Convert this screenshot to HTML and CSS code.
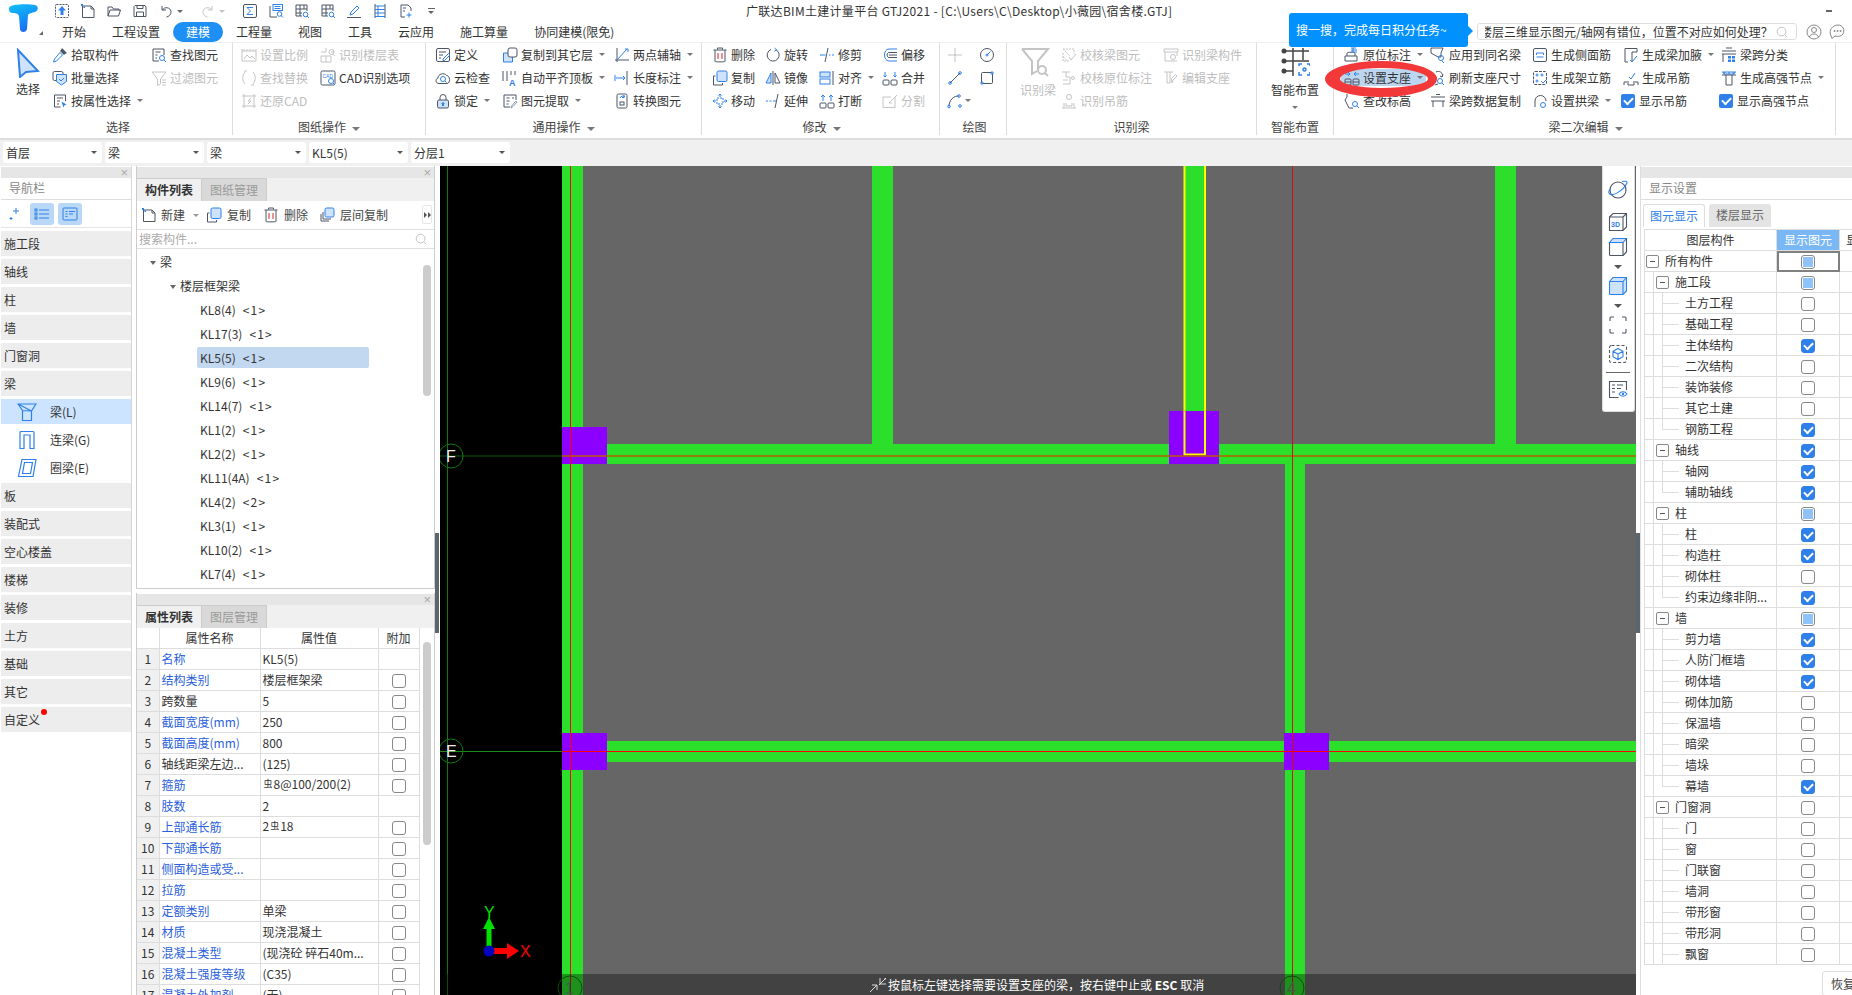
FILE: index.html
```html
<!DOCTYPE html>
<html lang="zh-CN">
<head>
<meta charset="utf-8">
<title>广联达BIM土建计量平台 GTJ2021</title>
<link rel="stylesheet" href="styles.css">
</head>
<body>
<svg class="sprite" aria-hidden="true">
<defs>
<linearGradient id="logo-g" x1="0" y1="0" x2="0.4" y2="1"><stop offset="0" stop-color="#12c3f7"/><stop offset=".55" stop-color="#1296f5"/><stop offset="1" stop-color="#1a6ff0"/></linearGradient>
<symbol id="i-new" viewBox="0 0 16 16"><path d="M3 3h8l3 3v8.500H2.500V3z"/><path d="M11 3v3h3"/><path class="fb" d="M1 1h2v2H1zM3.500 3.500h1.500v1.500H3.500z"/></symbol>
<symbol id="i-open" viewBox="0 0 16 16"><path d="M2 13V4h4l1.500 2H13v1.500M2 13l2-6h10.500L12.500 13z"/></symbol>
<symbol id="i-up" viewBox="0 0 16 16"><rect x="1.500" y="1.500" width="13" height="13" rx="1" stroke-dasharray="2 1"/><path class="fb" d="M8 3l4 4.500H9.500V12h-3V7.500H4z"/></symbol>
<symbol id="i-save" viewBox="0 0 16 16"><path d="M3 2.500h10l1 1.500v9.500H2V3.500z"/><path d="M5 2.500v3h6v-3M4.500 13.500V9h7v4.500"/></symbol>
<symbol id="i-undo" viewBox="0 0 16 16"><path d="M4 3v4h4M4.500 7C6 3.500 12.500 4 13 8.500c.3 3-2 5-4.500 5.500"/></symbol>
<symbol id="i-redo" viewBox="0 0 16 16"><path d="M12 3v4H8M11.500 7C10 3.500 3.500 4 3 8.500c-.3 3 2 5 4.500 5.500"/></symbol>
<symbol id="i-sum" viewBox="0 0 16 16"><rect x="1.500" y="1.500" width="13" height="13" rx="1.500"/><path class="u" d="M11 4.500H5l3.500 3.500L5 11.500h6"/></symbol>
<symbol id="i-calc" viewBox="0 0 16 16"><path d="M2 3v11h7"/><rect class="u" x="5" y="1.500" width="9.500" height="6"/><path class="u" d="M6.500 3.500h6M6.500 5.500h6"/><circle class="u" cx="11.500" cy="11" r="2.300"/><path class="u" d="M13 12.500l2 2"/></symbol>
<symbol id="i-gridq" viewBox="0 0 16 16"><path d="M2 2h11v6M2 2v11h6M2 6h11M2 10h6M6 2v11M10 2v4"/><circle class="u" cx="11.500" cy="11.500" r="2.300"/><path class="u" d="M13 13l2 2"/></symbol>
<symbol id="i-pen" viewBox="0 0 16 16"><path class="u" d="M4 12l1-3 6-6 2 2-6 6z"/><path d="M1 14.500h14"/></symbol>
<symbol id="i-ruler" viewBox="0 0 16 16"><path d="M3 1v14M13 1v14"/><path class="u" d="M3 3h10M3 6.500h10M3 10h10M3 13.500h10M6 3v10.500"/></symbol>
<symbol id="i-pdoc" viewBox="0 0 16 16"><path d="M3 2h7l3 3v3M3 2v12h4"/><path class="u" d="M11 9.500v5M8.500 12h5"/><path d="M5 5h3M5 8h2"/></symbol>
<symbol id="i-pick" viewBox="0 0 16 16"><path class="fk" d="M10 1l5 5-2 1-1 1-4-4 1-1z"/><path class="u" d="M8 5.500l2.500 2.500-6 6-3 1 1-3z"/></symbol>
<symbol id="i-batch" viewBox="0 0 16 16"><rect x="1" y="1.500" width="10" height="9" rx="1.500"/><path class="u f" d="M4.500 4.500h10v7l-5 3.500-5-3.500z"/><path class="u" d="M7 9l2 2 3-3"/></symbol>
<symbol id="i-attr" viewBox="0 0 16 16"><path d="M13.500 8V2h-11v12h6"/><path d="M5 5h6M5 8h3M5 11h2"/><path class="fb" d="M9.500 8.500l5 3-2 .8-1 2.200z"/></symbol>
<symbol id="i-find" viewBox="0 0 16 16"><path d="M2 2h11v6M2 2v12h6"/><path d="M4.500 5h5M4.500 8h2M4.500 11h1.500"/><circle class="u" cx="11" cy="11" r="2.500"/><path class="u" d="M13 13l2 2"/></symbol>
<symbol id="i-filter" viewBox="0 0 16 16"><path d="M1 2h14l-5.500 7v5l-3 1.500V9z"/><path d="M11 10h4M11 12.500h4M11 15h4"/></symbol>
<symbol id="i-scale" viewBox="0 0 16 16"><path d="M1 4v10h14V4M1 2v2h14V2M3 2v2M6 2v2M9 2v2M12 2v2"/><path d="M3 12l3-4 3 3 2-2 3 3"/></symbol>
<symbol id="i-floor" viewBox="0 0 16 16"><path d="M1 5h5V1M1 9h5v6H1zM6 9h5M11 9v6H6M11 5h3"/><circle cx="11.500" cy="5" r="2.500"/><path d="M13 7l2 2"/></symbol>
<symbol id="i-replace" viewBox="0 0 16 16"><path d="M4 2C1 5 1 11 4 14M12 2c3 3 3 9 0 12"/><path d="M3 1h3M10 15h3"/></symbol>
<symbol id="i-cad" viewBox="0 0 16 16"><rect x="1" y="1" width="14" height="14" rx="1.500"/><circle class="u" cx="11" cy="11" r="2.500"/><path class="u" d="M13 13l2 2"/><text class="tt" x="2.500" y="7.500">CAD</text></symbol>
<symbol id="i-restore" viewBox="0 0 16 16"><path d="M3 1v14M13 1v14M1 3h14M1 13h14"/><path d="M10 5L7 8h3l-3 3"/></symbol>
<symbol id="i-def" viewBox="0 0 16 16"><rect x="1.500" y="1.500" width="13" height="13" rx="1.500"/><path d="M4 5h7M4 8h4M4 11h2"/><path class="u" d="M8 12l5.500-5.500 1.500 1.500L9.500 13.500H8z"/></symbol>
<symbol id="i-cloud" viewBox="0 0 16 16"><path d="M4 13.500C.5 13.500 0 9 3 8c0-4 6-6 8.500-2.500C15 5.500 16 13 12 13.500z"/><circle class="u" cx="8" cy="9" r="2.500"/><path class="u" d="M10 11l1.500 1.500"/></symbol>
<symbol id="i-lock" viewBox="0 0 16 16"><path d="M5 7V4.500a3 3 0 016 0V7"/><rect class="f" x="2.500" y="7" width="11" height="8" rx="1.500"/><path class="fb" d="M8 9l2 2H9v2H7v-2H6z"/></symbol>
<symbol id="i-copyto" viewBox="0 0 16 16"><path class="u f" d="M1.500 6h9v9h-9z"/><rect x="6" y="1" width="9" height="9" rx="2" fill="#fff"/></symbol>
<symbol id="i-align" viewBox="0 0 16 16"><path d="M1 1v10M5 1v10M9 1v4M13 1v4"/><text class="ta" x="7" y="15.500">A</text></symbol>
<symbol id="i-extract" viewBox="0 0 16 16"><path d="M2 2h12v5M2 2v12h6"/><path d="M4.500 5h3M10 5h2M4.500 8h3M4.500 11h2"/><path d="M15 9l-4 4.500-2 1.500.5-2 4-4.500z" stroke="#8899aa"/></symbol>
<symbol id="i-twopt" viewBox="0 0 16 16"><path d="M3 1v14M1 13h14"/><path class="u" d="M3 13L13 2M11 2h3v3"/></symbol>
<symbol id="i-dim" viewBox="0 0 16 16"><path d="M13 1v14"/><path class="u" d="M2 8h9M1 5v6M9 6l2 2-2 2"/></symbol>
<symbol id="i-conv" viewBox="0 0 16 16"><rect x="3" y="1" width="10" height="14" rx="1.500"/><path class="u" d="M6 5a3 3 0 015-1M10 2v2.500H8"/><rect x="6" y="9" width="4" height="3"/></symbol>
<symbol id="i-del" viewBox="0 0 16 16"><path d="M5.500 2.500V1h5v1.500M1.500 3h13M3 3v11.500c0 .5 10 .5 10 0V3"/><path d="M6 6v6M10 6v6" stroke="#d22"/></symbol>
<symbol id="i-copy" viewBox="0 0 16 16"><path d="M1.500 6h2M1.500 6v9h9v-2"/><rect class="u f" x="5" y="1" width="10" height="10.500" rx="1.500"/></symbol>
<symbol id="i-layercopy" viewBox="0 0 16 16"><path d="M4 5v7h8M2 7v7h8"/><rect class="u f" x="6" y="1" width="9" height="9" rx="1.500"/></symbol>
<symbol id="i-move" viewBox="0 0 16 16"><rect class="u" x="5" y="5" width="6" height="6" stroke-dasharray="2 1"/><path class="u" d="M8 1v3M8 12v3M1 8h3M12 8h3M6.500 2.500L8 1l1.500 1.500M6.500 13.500L8 15l1.500-1.500M2.500 6.500L1 8l1.500 1.500M13.500 6.500L15 8l-1.500 1.500"/></symbol>
<symbol id="i-rot" viewBox="0 0 16 16"><path d="M6 2.500a6 6 0 105 .3"/><path class="u" d="M9.500 1l2 1.800-2.200 1.500"/></symbol>
<symbol id="i-mirror" viewBox="0 0 16 16"><path d="M8 1v14"/><path class="u f" d="M6 3v10H1z"/><path d="M10 3v10h5z"/></symbol>
<symbol id="i-ext" viewBox="0 0 16 16"><path d="M13 1l-3 14"/><path class="u" d="M1 8h2M4.500 8h2M8 8h3" /></symbol>
<symbol id="i-trim" viewBox="0 0 16 16"><path d="M9 1L6 15"/><path class="u" d="M1 8h5.500M10 8h1.500M13 8h2"/></symbol>
<symbol id="i-alignb" viewBox="0 0 16 16"><rect class="u f" x="1" y="2" width="10" height="5"/><rect class="u" x="1" y="9" width="10" height="5"/><path d="M14 1v14"/></symbol>
<symbol id="i-break" viewBox="0 0 16 16"><rect x="1" y="10" width="6" height="5" rx="1"/><rect x="9" y="10" width="6" height="5" rx="1"/><path class="u" d="M4 8V2M2 4l2-2 2 2M12 8V2M10 4l2-2 2 2"/></symbol>
<symbol id="i-merge" viewBox="0 0 16 16"><rect x="1" y="10" width="6" height="5" rx="1"/><rect x="9" y="10" width="6" height="5" rx="1"/><path class="u" d="M3 2v5M1.500 5.500L3 7l1.500-1.500M13 2v5M11.500 5.500L13 7l1.500-1.500"/></symbol>
<symbol id="i-split" viewBox="0 0 16 16"><path d="M13 4v10.500H1V4h8"/><path d="M15 2l-8 8 3 0"/></symbol>
<symbol id="i-offset" viewBox="0 0 16 16"><path class="u" d="M15 2H7C1 2 1 14 7 14h8"/><path d="M15 5.500H7c-2.500 0-2.500 5 0 5h8M15 8H7"/></symbol>
<symbol id="i-pt" viewBox="0 0 16 16"><path d="M8 1v5M8 10v5M1 8h5M10 8h5"/><circle class="fk" cx="8" cy="8" r="1.500"/></symbol>
<symbol id="i-circ" viewBox="0 0 16 16"><circle cx="8" cy="8" r="6.500"/><circle class="u" cx="8" cy="8" r="1"/><path class="u" d="M8 8l3.500-3.500"/></symbol>
<symbol id="i-line" viewBox="0 0 16 16"><path d="M3 13L13 3"/><circle class="u" cx="3" cy="13" r="1.300"/><circle class="u" cx="13" cy="3" r="1.300"/></symbol>
<symbol id="i-rect" viewBox="0 0 16 16"><rect x="2.500" y="2.500" width="11" height="11" rx="1"/><circle class="u" cx="13" cy="3" r="1.200"/><circle class="u" cx="3" cy="13" r="1.200"/></symbol>
<symbol id="i-arc" viewBox="0 0 16 16"><path d="M2 13.500C2 7 7 2.500 12 3"/><circle class="u" cx="2" cy="13.500" r="1.300"/><circle class="u" cx="12" cy="3" r="1.300"/><circle class="u" cx="13" cy="13" r="1.300"/></symbol>
<symbol id="i-check" viewBox="0 0 16 16"><path d="M2 2h11v5M2 2l7 7M2 6v8h6M2 10l5 4" stroke-dasharray="2 1"/><path d="M8 10l2 3 5-6"/></symbol>
<symbol id="i-cdim" viewBox="0 0 16 16"><path d="M2 14h7V7H5V2"/><path d="M2 10h5M1 2h8"/><circle cx="12" cy="8" r="1.500"/></symbol>
<symbol id="i-hang" viewBox="0 0 16 16"><circle cx="8" cy="4" r="2.500"/><path d="M1 15h14M3 15v-5M13 15v-5M5 10v3h6v-3"/></symbol>
<symbol id="i-brec" viewBox="0 0 16 16"><path d="M1 2h14v3H1zM2 5v9h12M14 5v4"/><circle cx="10" cy="10" r="2.500"/></symbol>
<symbol id="i-esup" viewBox="0 0 16 16"><path d="M1 2h9M4 2v11h3V2"/><path d="M10 13l1-3 4-4-1.500-1.500-4 4z" transform="translate(-1 0)"/></symbol>
<symbol id="i-yw" viewBox="0 0 16 16"><path d="M1 14v-5h12v5zM3 9V6c0-1 8-1 8 0v3"/><path class="u" d="M7 1h5M7 3h6M7 5h6M9 1v4"/></symbol>
<symbol id="i-app" viewBox="0 0 16 16"><path d="M1 1h12l-2 5v4H8L1 6z"/><circle class="u" cx="11" cy="11" r="2.500"/><path class="u" d="M12 14l2 2"/></symbol>
<symbol id="i-sup" viewBox="0 0 16 16"><rect x="1" y="9" width="6" height="6" rx="1"/><rect x="9" y="9" width="6" height="6" rx="1"/><path d="M1 12h6M9 12h6"/><path class="u" d="M1 4h5M4 2l2 2-2 2M15 4h-5M12 2l-2 2 2 2"/></symbol>
<symbol id="i-ref" viewBox="0 0 16 16"><path d="M6 2c3-2 8 1 6 5M13 4.500L12 7l-2-1"/><path d="M2 8h5M2 11h3M8 14l-3 1"/><circle class="u" cx="10" cy="11" r="2.500"/><path class="u" d="M12 13l2 2"/></symbol>
<symbol id="i-lv" viewBox="0 0 16 16"><path d="M3 1v3l-2 3 4 8h4"/><circle class="u" cx="11" cy="11" r="2.500"/><path class="u" d="M13 13l2 2"/></symbol>
<symbol id="i-span" viewBox="0 0 16 16"><path d="M1 4h14M1 8h14M3 8v6M13 8v6"/><path d="M6 1.500h4"/></symbol>
<symbol id="i-side" viewBox="0 0 16 16"><rect x="1.500" y="1.500" width="13" height="13" rx="1.500"/><path class="u" d="M4.500 6h7v2M4.500 6v2M4.500 10h7"/></symbol>
<symbol id="i-frame" viewBox="0 0 16 16"><rect x="1.500" y="1.500" width="13" height="13" rx="1.500" stroke-dasharray="3 1"/><circle class="u" cx="5" cy="5" r="1"/><circle class="u" cx="10" cy="5" r="1"/><circle class="u" cx="5" cy="11" r="1"/><path class="u" d="M9 11l2 2 4-4"/></symbol>
<symbol id="i-arch" viewBox="0 0 16 16"><path d="M3 14V8a5.500 5.500 0 0111 0"/><circle class="u" cx="11" cy="12" r="2.500"/></symbol>
<symbol id="i-hau" viewBox="0 0 16 16"><path d="M2 1.500h12V5H9v10M2 1.500V15h3"/><path class="u" d="M7 13l2 2 5-6"/></symbol>
<symbol id="i-hg" viewBox="0 0 16 16"><path d="M1 15v-3l3 0M15 15v-3l-3 0M5 11v4h6v-4"/><path class="u" d="M6 7l2 2 4-6"/></symbol>
<symbol id="i-sclass" viewBox="0 0 16 16"><path d="M1 4h14M1 7h14M2 7v8"/><path d="M5 1h6"/><path class="fb" d="M7 9h3v2.500H7zM11 9h3v2.500h-3zM7 12.500h3V15H7zM11 12.500h3V15h-3z"/></symbol>
<symbol id="i-node" viewBox="0 0 16 16"><path class="u" d="M1 2h14M2 2l1 2h10l1-2M4 2l-1 2M8 2v2M12 2l1 2"/><path d="M1 5h14M5 5v10h6V5"/></symbol>
<symbol id="i-star" viewBox="0 0 16 16"><path class="u" d="M9 2v6M6 5h6M4 11v3M2.500 12.500h3"/></symbol>
<symbol id="i-list" viewBox="0 0 16 16"><rect class="u" x="1" y="3" width="2" height="2"/><rect class="u" x="1" y="7" width="2" height="2"/><rect class="u" x="1" y="11" width="2" height="2"/><path class="u" d="M5 4h10M5 8h10M5 12h10"/></symbol>
<symbol id="i-form" viewBox="0 0 16 16"><rect class="u" x="1" y="2" width="14" height="12" rx="1"/><path class="u" d="M3.500 5.500h2M7 5.500h6M3.500 8h2M7 8h4M3.500 10.500h2"/></symbol>
<symbol id="i-search" viewBox="0 0 16 16"><circle cx="7.500" cy="7.500" r="5"/><path d="M11 11l3 3"/></symbol>
<symbol id="i-user" viewBox="0 0 16 16"><circle cx="8" cy="8" r="7"/><circle cx="8" cy="6" r="2.500"/><path d="M3.500 13c1-4 8-4 9 0"/></symbol>
<symbol id="i-chat" viewBox="0 0 16 16"><path d="M2 12C-1 6 4 1 9 1c5 0 7 5 5 9-1 2-5 3-8 2l-3 2.500z"/><circle class="fb" cx="5.500" cy="7" r=".9"/><circle class="fb" cx="8.500" cy="7" r=".9"/><circle class="fb" cx="11.500" cy="7" r=".9"/></symbol>
<symbol id="i-planet" viewBox="0 0 20 20"><ellipse cx="10" cy="10" rx="8" ry="8"/><path class="u" d="M1 13C3 18 15 11 19 3c.5-2-3-2-5-1.500"/><path class="u" d="M1 13c-.5-1 .5-3 1.500-4"/></symbol>
<symbol id="i-3d" viewBox="0 0 20 20"><path d="M1.500 5L5 1.500h13.500V15L15 18.500H1.500z"/><path d="M1.500 5H15v13.500M15 5l3.500-3.500"/><text class="t3" x="3" y="15">3D</text></symbol>
<symbol id="i-cube" viewBox="0 0 20 20"><path d="M1.500 5.500v12a1 1 0 001 1H15V5.500z"/><path class="u f" d="M1.500 5.500L5 1.500h13.500L15 5.500z"/><path d="M15 18.500l3.500-3.500V2"/></symbol>
<symbol id="i-cubef" viewBox="0 0 20 20"><path class="u f" d="M1.500 5.500L5 1.500h13.500V15L15 18.500H2.500a1 1 0 01-1-1z"/><path class="u" d="M1.500 5.500H15v13M15 5.500l3.500-4"/></symbol>
<symbol id="i-fit" viewBox="0 0 20 20"><path d="M2 6V3a1 1 0 011-1h3M14 2h3a1 1 0 011 1v3M18 14v3a1 1 0 01-1 1h-3M6 18H3a1 1 0 01-1-1v-3"/></symbol>
<symbol id="i-dcube" viewBox="0 0 20 20"><rect x="1.500" y="1.500" width="17" height="17" rx="2" stroke-dasharray="3 2"/><path class="u" d="M10 4.500l5 2.800v5.400l-5 2.800-5-2.800V7.300zM5 7.300l5 2.800 5-2.800M10 10v5.500"/></symbol>
<symbol id="i-lview" viewBox="0 0 20 20"><path d="M18.500 11V2.500h-17v16h9"/><path d="M4 6h3M9 6h6M4 9.500h3M9 9.500h4M4 13h3"/><circle class="fb" cx="15" cy="15" r="1.200"/><path class="u" d="M11 15c2-3 6-3 8 0-2 3-6 3-8 0z"/></symbol>
<symbol id="i-l" viewBox="0 0 20 20"><path d="M1 2H19L14.500 9V18.500H5.500V8.500zM5.500 8.500L14.500 9M1 2L14.500 9"/></symbol>
<symbol id="i-g" viewBox="0 0 20 20"><path d="M3 18.500V2.500a1 1 0 011-1h12a1 1 0 011 1v16h-4V5H7v13.500z"/></symbol>
<symbol id="i-e" viewBox="0 0 20 20"><path d="M5 1.500h14L16 18.500H1.500z"/><path d="M7.500 4.500h8L13.500 15.500H5.500z"/></symbol>
</defs>
</svg>

<div class="app">
<header class="top">
  <svg class="logo" viewBox="0 0 30 30"><path class="logo-t" d="M3 3C8 1 22 1 27 2C30.500 3 31 7 27 9C24 10 21 10 20 12L19 26C18.500 30 12 30 12 26L11 13C10 10 7 10 4 10C0 9 0 4 3 3z"/></svg>
  <span class="logo-mark"></span>
  <div class="top-main">
    <div class="qa">
      <svg class="ic"><use href="#i-up"/></svg>
      <svg class="ic"><use href="#i-new"/></svg>
      <svg class="ic"><use href="#i-open"/></svg>
      <svg class="ic"><use href="#i-save"/></svg>
      <svg class="ic"><use href="#i-undo"/></svg><span class="caret c-qa"></span>
      <svg class="ic off"><use href="#i-redo"/></svg><span class="caret c-qa off-c"></span>
      <svg class="ic"><use href="#i-sum"/></svg>
      <svg class="ic"><use href="#i-calc"/></svg>
      <svg class="ic"><use href="#i-gridq"/></svg>
      <svg class="ic"><use href="#i-gridq"/></svg>
      <svg class="ic"><use href="#i-pen"/></svg>
      <svg class="ic"><use href="#i-ruler"/></svg>
      <svg class="ic"><use href="#i-pdoc"/></svg>
      <span class="more"></span>
      <span class="title">广联达BIM土建计量平台 GTJ2021 - [C:\Users\C\Desktop\小薇园\宿舍楼.GTJ]</span>
      <span class="minimize"></span>
    </div>
    <div class="tabs">
      <span class="tab">开始</span><span class="tab">工程设置</span><span class="tab on">建模</span><span class="tab">工程量</span><span class="tab">视图</span><span class="tab">工具</span><span class="tab">云应用</span><span class="tab">施工算量</span><span class="tab">协同建模(限免)</span>
      <div class="help"><span class="help-text">楼层三维显示图元/轴网有错位，位置不对应如何处理？</span><svg class="ic s-ic"><use href="#i-search"/></svg></div>
      <svg class="ic u-ic"><use href="#i-user"/></svg>
      <svg class="ic c-ic"><use href="#i-chat"/></svg>
    </div>
  </div>
</header>
<div class="tip">搜一搜，完成每日积分任务~</div>

<section class="ribbon">
  <div class="grp g1">
    <div class="body">
      <div class="col big w44"><svg class="big-ic sel-ic" viewBox="0 0 24 30"><path d="M2 2L22 23L10 24L4 29z"/></svg><span>选择</span></div>
      <div class="col w99">
        <div class="it"><svg class="ic"><use href="#i-pick"/></svg><span>拾取构件</span></div>
        <div class="it"><svg class="ic"><use href="#i-batch"/></svg><span>批量选择</span></div>
        <div class="it"><svg class="ic"><use href="#i-attr"/></svg><span>按属性选择</span><i class="caret"></i></div>
      </div>
      <div class="col">
        <div class="it"><svg class="ic"><use href="#i-find"/></svg><span>查找图元</span></div>
        <div class="it off"><svg class="ic"><use href="#i-filter"/></svg><span>过滤图元</span></div>
      </div>
    </div>
    <div class="gt">选择</div>
  </div>
  <div class="grp g2">
    <div class="body">
      <div class="col w79">
        <div class="it off"><svg class="ic"><use href="#i-scale"/></svg><span>设置比例</span></div>
        <div class="it off"><svg class="ic"><use href="#i-replace"/></svg><span>查找替换</span></div>
        <div class="it off"><svg class="ic"><use href="#i-restore"/></svg><span>还原CAD</span></div>
      </div>
      <div class="col">
        <div class="it off"><svg class="ic"><use href="#i-floor"/></svg><span>识别楼层表</span></div>
        <div class="it"><svg class="ic"><use href="#i-cad"/></svg><span>CAD识别选项</span></div>
      </div>
    </div>
    <div class="gt">图纸操作<i class="caret c-big"></i></div>
  </div>
  <div class="grp g3">
    <div class="body">
      <div class="col w67">
        <div class="it"><svg class="ic"><use href="#i-def"/></svg><span>定义</span></div>
        <div class="it"><svg class="ic"><use href="#i-cloud"/></svg><span>云检查</span></div>
        <div class="it"><svg class="ic"><use href="#i-lock"/></svg><span>锁定</span><i class="caret"></i></div>
      </div>
      <div class="col w112">
        <div class="it"><svg class="ic"><use href="#i-copyto"/></svg><span>复制到其它层</span><i class="caret"></i></div>
        <div class="it"><svg class="ic"><use href="#i-align"/></svg><span>自动平齐顶板</span><i class="caret"></i></div>
        <div class="it"><svg class="ic"><use href="#i-extract"/></svg><span>图元提取</span><i class="caret"></i></div>
      </div>
      <div class="col">
        <div class="it"><svg class="ic"><use href="#i-twopt"/></svg><span>两点辅轴</span><i class="caret"></i></div>
        <div class="it"><svg class="ic"><use href="#i-dim"/></svg><span>长度标注</span><i class="caret"></i></div>
        <div class="it"><svg class="ic"><use href="#i-conv"/></svg><span>转换图元</span></div>
      </div>
    </div>
    <div class="gt">通用操作<i class="caret c-big"></i></div>
  </div>
  <div class="grp g4">
    <div class="body">
      <div class="col w53">
        <div class="it"><svg class="ic"><use href="#i-del"/></svg><span>删除</span></div>
        <div class="it"><svg class="ic"><use href="#i-copy"/></svg><span>复制</span></div>
        <div class="it"><svg class="ic"><use href="#i-move"/></svg><span>移动</span></div>
      </div>
      <div class="col w54">
        <div class="it"><svg class="ic"><use href="#i-rot"/></svg><span>旋转</span></div>
        <div class="it"><svg class="ic"><use href="#i-mirror"/></svg><span>镜像</span></div>
        <div class="it"><svg class="ic"><use href="#i-ext"/></svg><span>延伸</span></div>
      </div>
      <div class="col w63">
        <div class="it"><svg class="ic"><use href="#i-trim"/></svg><span>修剪</span></div>
        <div class="it"><svg class="ic"><use href="#i-alignb"/></svg><span>对齐</span><i class="caret"></i></div>
        <div class="it"><svg class="ic"><use href="#i-break"/></svg><span>打断</span></div>
      </div>
      <div class="col">
        <div class="it"><svg class="ic"><use href="#i-offset"/></svg><span>偏移</span></div>
        <div class="it"><svg class="ic"><use href="#i-merge"/></svg><span>合并</span></div>
        <div class="it off"><svg class="ic"><use href="#i-split"/></svg><span>分割</span></div>
      </div>
    </div>
    <div class="gt">修改<i class="caret c-big"></i></div>
  </div>
  <div class="grp g5">
    <div class="body">
      <div class="col w32">
        <div class="it off"><svg class="ic"><use href="#i-pt"/></svg></div>
        <div class="it"><svg class="ic"><use href="#i-line"/></svg></div>
        <div class="it"><svg class="ic"><use href="#i-arc"/></svg><i class="caret c-arc"></i></div>
      </div>
      <div class="col">
        <div class="it"><svg class="ic"><use href="#i-circ"/></svg></div>
        <div class="it"><svg class="ic"><use href="#i-rect"/></svg></div>
      </div>
    </div>
    <div class="gt">绘图</div>
  </div>
  <div class="grp g6">
    <div class="body">
      <div class="col big w46 off"><svg class="big-ic rec-ic" viewBox="0 0 30 30"><path d="M2 2h26L18 14v9M2 2l10 12v13l5-3"/><circle cx="22" cy="23" r="4"/><path d="M25 26l3 3"/></svg><span>识别梁</span></div>
      <div class="col w102">
        <div class="it off"><svg class="ic"><use href="#i-check"/></svg><span>校核梁图元</span></div>
        <div class="it off"><svg class="ic"><use href="#i-cdim"/></svg><span>校核原位标注</span></div>
        <div class="it off"><svg class="ic"><use href="#i-hang"/></svg><span>识别吊筋</span></div>
      </div>
      <div class="col">
        <div class="it off"><svg class="ic"><use href="#i-brec"/></svg><span>识别梁构件</span></div>
        <div class="it off"><svg class="ic"><use href="#i-esup"/></svg><span>编辑支座</span></div>
      </div>
    </div>
    <div class="gt">识别梁</div>
  </div>
  <div class="grp g7">
    <div class="body">
      <div class="col big w-full"><svg class="big-ic smart-ic" viewBox="0 0 30 30"><path d="M5 4h24M5 14h24M13 1v28M23 1v12M5 24h8"/><circle cx="4" cy="4" r="2.500" class="dot"/><circle cx="4" cy="14" r="2.500" class="dot"/><circle cx="4" cy="24" r="2.500" class="dot"/><path class="smart-b" d="M19 19v-2h3M27 17h3v2M30 25v3h-3M22 28h-3v-3"/><circle class="smart-b" cx="24.500" cy="22.500" r="1.500"/></svg><span>智能布置</span><i class="caret c-down"></i></div>
    </div>
    <div class="gt">智能布置</div>
  </div>
  <div class="grp g8">
    <div class="body">
      <div class="col w86">
        <div class="it"><svg class="ic"><use href="#i-yw"/></svg><span>原位标注</span><i class="caret"></i></div>
        <div class="it hl"><svg class="ic"><use href="#i-sup"/></svg><span>设置支座</span><i class="caret"></i></div>
        <div class="it"><svg class="ic"><use href="#i-lv"/></svg><span>查改标高</span></div>
      </div>
      <div class="col w102">
        <div class="it"><svg class="ic"><use href="#i-app"/></svg><span>应用到同名梁</span></div>
        <div class="it"><svg class="ic"><use href="#i-ref"/></svg><span>刷新支座尺寸</span></div>
        <div class="it"><svg class="ic"><use href="#i-span"/></svg><span>梁跨数据复制</span></div>
      </div>
      <div class="col w91">
        <div class="it"><svg class="ic"><use href="#i-side"/></svg><span>生成侧面筋</span></div>
        <div class="it"><svg class="ic"><use href="#i-frame"/></svg><span>生成架立筋</span></div>
        <div class="it"><svg class="ic"><use href="#i-arch"/></svg><span>设置拱梁</span><i class="caret"></i></div>
      </div>
      <div class="col w98">
        <div class="it"><svg class="ic"><use href="#i-hau"/></svg><span>生成梁加腋</span><i class="caret"></i></div>
        <div class="it"><svg class="ic"><use href="#i-hg"/></svg><span>生成吊筋</span></div>
        <div class="it"><b class="rck"></b><span>显示吊筋</span></div>
      </div>
      <div class="col">
        <div class="it"><svg class="ic"><use href="#i-sclass"/></svg><span>梁跨分类</span></div>
        <div class="it"><svg class="ic"><use href="#i-node"/></svg><span>生成高强节点</span><i class="caret"></i></div>
        <div class="it"><b class="rck"></b><span>显示高强节点</span></div>
      </div>
    </div>
    <div class="gt">梁二次编辑<i class="caret c-big"></i></div>
  </div>
</section>
<div class="ring"></div>

<div class="sel-bar">
  <div class="sel">首层<i class="caret"></i></div>
  <div class="sel">梁<i class="caret"></i></div>
  <div class="sel">梁<i class="caret"></i></div>
  <div class="sel">KL5(5)<i class="caret"></i></div>
  <div class="sel">分层1<i class="caret"></i></div>
</div>

<main class="main">
  <nav class="nav">
    <div class="close-bar"><span class="x">×</span></div>
    <div class="nav-title">导航栏</div>
    <div class="nav-tools">
      <svg class="ic tool-plus"><use href="#i-star"/></svg>
      <span class="tool-on"><svg class="ic"><use href="#i-list"/></svg></span>
      <span class="tool-on"><svg class="ic"><use href="#i-form"/></svg></span>
    </div>
    <div class="ni">施工段</div>
    <div class="ni">轴线</div>
    <div class="ni">柱</div>
    <div class="ni">墙</div>
    <div class="ni">门窗洞</div>
    <div class="ni">梁</div>
    <div class="ns on"><svg class="nic"><use href="#i-l"/></svg>梁(L)</div>
    <div class="ns"><svg class="nic"><use href="#i-g"/></svg>连梁(G)</div>
    <div class="ns"><svg class="nic"><use href="#i-e"/></svg>圈梁(E)</div>
    <div class="ni">板</div>
    <div class="ni">装配式</div>
    <div class="ni">空心楼盖</div>
    <div class="ni">楼梯</div>
    <div class="ni">装修</div>
    <div class="ni">土方</div>
    <div class="ni">基础</div>
    <div class="ni">其它</div>
    <div class="ni">自定义<b class="red-dot"></b></div>
  </nav>

  <div class="side">
    <section class="panel p-list">
      <div class="close-bar"><span class="x">×</span></div>
      <div class="ptabs"><span class="ptab on">构件列表</span><span class="ptab">图纸管理</span></div>
      <div class="ptools">
        <svg class="ic"><use href="#i-new"/></svg><span class="pt t-new">新建</span><i class="caret c-new"></i>
        <svg class="ic"><use href="#i-copy"/></svg><span class="pt t-c">复制</span>
        <svg class="ic"><use href="#i-del"/></svg><span class="pt t-d">删除</span>
        <svg class="ic"><use href="#i-layercopy"/></svg><span class="pt">层间复制</span>
        <span class="overflow-btn"><i class="ob"></i><i class="ob"></i></span>
      </div>
      <div class="psearch"><span>搜索构件...</span><svg class="ic s-ic"><use href="#i-search"/></svg></div>
      <div class="ptree">
        <div class="tr l0"><i class="caret"></i>梁</div>
        <div class="tr l1"><i class="caret"></i>楼层框架梁</div>
        <div class="tr l2">KL8(4)<span class="cnt">&lt;1&gt;</span></div>
        <div class="tr l2">KL17(3)<span class="cnt">&lt;1&gt;</span></div>
        <div class="tr l2 cur">KL5(5)<span class="cnt">&lt;1&gt;</span></div>
        <div class="tr l2">KL9(6)<span class="cnt">&lt;1&gt;</span></div>
        <div class="tr l2">KL14(7)<span class="cnt">&lt;1&gt;</span></div>
        <div class="tr l2">KL1(2)<span class="cnt">&lt;1&gt;</span></div>
        <div class="tr l2">KL2(2)<span class="cnt">&lt;1&gt;</span></div>
        <div class="tr l2">KL11(4A)<span class="cnt">&lt;1&gt;</span></div>
        <div class="tr l2">KL4(2)<span class="cnt">&lt;2&gt;</span></div>
        <div class="tr l2">KL3(1)<span class="cnt">&lt;1&gt;</span></div>
        <div class="tr l2">KL10(2)<span class="cnt">&lt;1&gt;</span></div>
        <div class="tr l2">KL7(4)<span class="cnt">&lt;1&gt;</span></div>
        <span class="sb sb1"></span>
      </div>
    </section>
    <section class="panel p-prop">
      <div class="close-bar"><span class="x">×</span></div>
      <div class="ptabs"><span class="ptab on">属性列表</span><span class="ptab">图层管理</span></div>
      <div class="ptable">
        <table class="props">
          <colgroup><col class="c1"><col class="c2"><col class="c3"><col class="c4"></colgroup>
          <thead><tr><th></th><th>属性名称</th><th>属性值</th><th>附加</th></tr></thead>
          <tbody>
            <tr><td class="n">1</td><td class="bl">名称</td><td>KL5(5)</td><td></td></tr>
            <tr><td class="n">2</td><td class="bl">结构类别</td><td>楼层框架梁</td><td class="m"><b class="cb"></b></td></tr>
            <tr><td class="n">3</td><td>跨数量</td><td>5</td><td class="m"><b class="cb"></b></td></tr>
            <tr><td class="n">4</td><td class="bl">截面宽度(mm)</td><td>250</td><td class="m"><b class="cb"></b></td></tr>
            <tr><td class="n">5</td><td class="bl">截面高度(mm)</td><td>800</td><td class="m"><b class="cb"></b></td></tr>
            <tr><td class="n">6</td><td>轴线距梁左边...</td><td>(125)</td><td class="m"><b class="cb"></b></td></tr>
            <tr><td class="n">7</td><td class="bl">箍筋</td><td><span class="steel">虫</span>8@100/200(2)</td><td class="m"><b class="cb"></b></td></tr>
            <tr><td class="n">8</td><td class="bl">肢数</td><td>2</td><td></td></tr>
            <tr><td class="n">9</td><td class="bl">上部通长筋</td><td>2<span class="steel">虫</span>18</td><td class="m"><b class="cb"></b></td></tr>
            <tr><td class="n">10</td><td class="bl">下部通长筋</td><td></td><td class="m"><b class="cb"></b></td></tr>
            <tr><td class="n">11</td><td class="bl">侧面构造或受...</td><td></td><td class="m"><b class="cb"></b></td></tr>
            <tr><td class="n">12</td><td class="bl">拉筋</td><td></td><td class="m"><b class="cb"></b></td></tr>
            <tr><td class="n">13</td><td class="bl">定额类别</td><td>单梁</td><td class="m"><b class="cb"></b></td></tr>
            <tr><td class="n">14</td><td class="bl">材质</td><td>现浇混凝土</td><td class="m"><b class="cb"></b></td></tr>
            <tr><td class="n">15</td><td class="bl">混凝土类型</td><td>(现浇砼 碎石40m...</td><td class="m"><b class="cb"></b></td></tr>
            <tr><td class="n">16</td><td class="bl">混凝土强度等级</td><td>(C35)</td><td class="m"><b class="cb"></b></td></tr>
            <tr><td class="n">17</td><td class="bl">混凝土外加剂</td><td>(无)</td><td class="m"><b class="cb"></b></td></tr>
          </tbody>
        </table>
        <span class="sb sb2"></span>
      </div>
    </section>
  </div>

  <div class="split"><span class="split-h"></span></div>

  <div class="canvas">
    <svg class="cad" viewBox="0 0 1196 829">
      <rect width="1196" height="829" fill="#000"/>
      <rect x="122" width="1074" height="829" fill="#666"/>
      <g fill="#2bdf2b">
        <rect x="122" width="21" height="829"/>
        <rect x="432" width="21" height="285"/>
        <rect x="745" width="19" height="285"/>
        <rect x="1055" width="21" height="285"/>
        <rect x="845" y="290" width="20" height="539"/>
        <rect x="122" y="278" width="1074" height="20"/>
        <rect x="122" y="575" width="1074" height="21"/>
      </g>
      <g fill="#8c00ff">
        <rect x="122" y="261" width="45" height="37"/>
        <rect x="729" y="245" width="50" height="53"/>
        <rect x="122" y="567" width="45" height="37"/>
        <rect x="844" y="567" width="45" height="37"/>
      </g>
      <path d="M744.500 0V288.500H765V0" fill="none" stroke="#ff0" stroke-width="2"/>
      <path d="M7.500 0V829" stroke="#0e7a0e" fill="none"/>
      <path d="M0 290H122" stroke="#0a5a0a" fill="none"/>
      <path d="M122 290H1196" stroke="#b85c00" stroke-width="1.500" fill="none"/>
      <path d="M0 585.500H122" stroke="#1a8a1a" fill="none"/>
      <path d="M122 585.500H1196" stroke="#f00" fill="none"/>
      <path d="M130.500 0V829" stroke="#f00" fill="none"/>
      <path d="M852.500 0V829" stroke="#d41010" fill="none"/>
      <g fill="none" stroke="#0d7a0d">
        <circle cx="11" cy="290" r="12"/>
        <circle cx="11" cy="585" r="12"/>
        <circle cx="130" cy="822" r="12"/>
        <circle cx="852" cy="822" r="12"/>
      </g>
      <text class="ax" x="6" y="296">F</text>
      <text class="ax" x="6" y="591">E</text>
      <text class="ax ax-d" x="125" y="828">1</text>
      <text class="ax ax-d" x="847" y="828">4</text>
      <path d="M46.500 785V763H43L49 751l6 12h-3.500v22z" fill="#00e000"/>
      <path d="M49 782h18v-5l12 8-12 8v-5H49z" fill="#f00"/>
      <circle cx="49" cy="785" r="5.500" fill="#0000c0"/>
      <text class="co co-y" x="44" y="752">Y</text>
      <text class="co co-x" x="80" y="791">X</text>
    </svg>
    <div class="tools3d">
      <svg class="tb"><use href="#i-planet"/></svg>
      <svg class="tb m12"><use href="#i-3d"/></svg>
      <svg class="tb"><use href="#i-cube"/></svg>
      <i class="caret-v"></i>
      <svg class="tb m7"><use href="#i-cubef"/></svg>
      <i class="caret-v"></i>
      <svg class="tb m7"><use href="#i-fit"/></svg>
      <svg class="tb m9"><use href="#i-dcube"/></svg>
      <span class="tsep"></span>
      <svg class="tb m6"><use href="#i-lview"/></svg>
    </div>
    <div class="hint"><svg class="hint-ic" viewBox="0 0 18 16"><path d="M1 15L8 8M3 8h5v5M17 1L10 8M16 3v-2M11 1v6h6"/></svg><span>按鼠标左键选择需要设置支座的梁，按右键中止或 <b>ESC</b> 取消</span></div>
  </div>

  <div class="split r"><span class="split-h"></span></div>

  <aside class="right">
    <div class="close-bar"></div>
    <div class="r-title">显示设置</div>
    <div class="r-tabs"><span class="rtab on">图元显示</span><span class="rtab">楼层显示</span></div>
    <table class="disp">
      <colgroup><col class="d1"><col class="d2"><col class="d3"></colgroup>
      <thead><tr><th>图层构件</th><th class="hd-on">显示图元</th><th class="hd-next">显</th></tr></thead>
      <tbody>
        <tr><td class="lv0"><b class="pm"></b>所有构件</td><td class="m focus"><b class="cb pt-c"></b></td><td></td></tr>
        <tr><td class="lv1"><b class="pm"></b>施工段</td><td class="m"><b class="cb pt-c"></b></td><td></td></tr>
        <tr><td class="lv2">土方工程</td><td class="m"><b class="cb"></b></td><td></td></tr>
        <tr><td class="lv2">基础工程</td><td class="m"><b class="cb"></b></td><td></td></tr>
        <tr><td class="lv2">主体结构</td><td class="m"><b class="cb ck"></b></td><td></td></tr>
        <tr><td class="lv2">二次结构</td><td class="m"><b class="cb"></b></td><td></td></tr>
        <tr><td class="lv2">装饰装修</td><td class="m"><b class="cb"></b></td><td></td></tr>
        <tr><td class="lv2">其它土建</td><td class="m"><b class="cb"></b></td><td></td></tr>
        <tr><td class="lv2 end">钢筋工程</td><td class="m"><b class="cb ck"></b></td><td></td></tr>
        <tr><td class="lv1"><b class="pm"></b>轴线</td><td class="m"><b class="cb ck"></b></td><td></td></tr>
        <tr><td class="lv2">轴网</td><td class="m"><b class="cb ck"></b></td><td></td></tr>
        <tr><td class="lv2 end">辅助轴线</td><td class="m"><b class="cb ck"></b></td><td></td></tr>
        <tr><td class="lv1"><b class="pm"></b>柱</td><td class="m"><b class="cb pt-c"></b></td><td></td></tr>
        <tr><td class="lv2">柱</td><td class="m"><b class="cb ck"></b></td><td></td></tr>
        <tr><td class="lv2">构造柱</td><td class="m"><b class="cb ck"></b></td><td></td></tr>
        <tr><td class="lv2">砌体柱</td><td class="m"><b class="cb"></b></td><td></td></tr>
        <tr><td class="lv2 end">约束边缘非阴...</td><td class="m"><b class="cb ck"></b></td><td></td></tr>
        <tr><td class="lv1"><b class="pm"></b>墙</td><td class="m"><b class="cb pt-c"></b></td><td></td></tr>
        <tr><td class="lv2">剪力墙</td><td class="m"><b class="cb ck"></b></td><td></td></tr>
        <tr><td class="lv2">人防门框墙</td><td class="m"><b class="cb ck"></b></td><td></td></tr>
        <tr><td class="lv2">砌体墙</td><td class="m"><b class="cb ck"></b></td><td></td></tr>
        <tr><td class="lv2">砌体加筋</td><td class="m"><b class="cb"></b></td><td></td></tr>
        <tr><td class="lv2">保温墙</td><td class="m"><b class="cb"></b></td><td></td></tr>
        <tr><td class="lv2">暗梁</td><td class="m"><b class="cb"></b></td><td></td></tr>
        <tr><td class="lv2">墙垛</td><td class="m"><b class="cb"></b></td><td></td></tr>
        <tr><td class="lv2 end">幕墙</td><td class="m"><b class="cb ck"></b></td><td></td></tr>
        <tr><td class="lv1"><b class="pm"></b>门窗洞</td><td class="m"><b class="cb"></b></td><td></td></tr>
        <tr><td class="lv2">门</td><td class="m"><b class="cb"></b></td><td></td></tr>
        <tr><td class="lv2">窗</td><td class="m"><b class="cb"></b></td><td></td></tr>
        <tr><td class="lv2">门联窗</td><td class="m"><b class="cb"></b></td><td></td></tr>
        <tr><td class="lv2">墙洞</td><td class="m"><b class="cb"></b></td><td></td></tr>
        <tr><td class="lv2">带形窗</td><td class="m"><b class="cb"></b></td><td></td></tr>
        <tr><td class="lv2">带形洞</td><td class="m"><b class="cb"></b></td><td></td></tr>
        <tr><td class="lv2">飘窗</td><td class="m"><b class="cb"></b></td><td></td></tr>
      </tbody>
    </table>
    <div class="r-foot"><span class="reset">恢复</span></div>
  </aside>
</main>
</div>
</body>
</html>
```

FILE: styles.css
```css
* { box-sizing: border-box; }
html, body { margin: 0; padding: 0; background: #fff; overflow: hidden; }
body {
  width: 1852px; height: 995px;
  font: 12px/16px "Noto Sans CJK SC", "Liberation Sans", sans-serif;
  color: #333;
}
.sprite { position: absolute; width: 0; height: 0; }
.app { width: 1852px; height: 995px; display: flex; flex-direction: column; position: relative; overflow: hidden; }

/* svg icon defaults */
.ic, .tb, .nic { fill: none; stroke: currentColor; stroke-width: 1; color: #4c5564; --b: #2f80e8; --l: #cfe2fb; flex: none; }
.ic { width: 16px; height: 16px; }
.u { stroke: var(--b); }
.f { fill: var(--l); }
.fb { fill: var(--b); stroke: none; }
.fk { fill: currentColor; stroke: none; }
.tt { font: 5px "Liberation Sans", sans-serif; fill: var(--b); stroke: none; }
.ta { font: bold 9px "Liberation Sans", sans-serif; fill: var(--b); stroke: none; }
.t3 { font: bold 7px "Liberation Sans", sans-serif; fill: var(--b); stroke: none; }
.off, .off .ic { color: #c4c4c4; --b: #c4c4c4; --l: #f0f0f0; }
svg.off { color: #c4c4c4; --b: #c4c4c4; --l: #f0f0f0; }

.caret { display: inline-block; width: 0; height: 0; border: 3px solid transparent; border-top: 3px solid #777; border-bottom: 0; vertical-align: middle; }

/* top */
.top { height: 42px; display: flex; position: relative; flex: none; }
.logo { width: 30px; height: 30px; position: absolute; left: 8px; top: 3px; }
.logo-t { fill: url(#logo-g); }
.logo-mark { position: absolute; left: 39px; top: 31px; border: 2px solid transparent; border-right-color: #666; border-bottom-color: #666; }
.top-main { margin-left: 49px; flex: 1; display: flex; flex-direction: column; min-width: 0; }
.qa { height: 21px; display: flex; align-items: center; gap: 10px; padding-left: 5px; padding-top: 1px; }
.c-qa { margin-left: -7px; margin-right: 7px; border-top-color: #666; }
.off-c { border-top-color: #c4c4c4; }
.more { width: 7px; height: 6px; border-top: 1px solid #666; position: relative; margin-left: 4px; }
.more::after { content: ""; position: absolute; left: 0; top: 2px; border: 3.500px solid transparent; border-top: 3.500px solid #666; border-bottom: 0; }
.title { margin-left: 301px; white-space: nowrap; color: #333; letter-spacing: .3px; }
.minimize { width: 6px; height: 2px; background: #666; margin-left: auto; margin-right: 20px; }
.tabs { height: 21px; display: flex; align-items: center; }
.tab { padding: 0 13px; height: 20px; line-height: 20px; white-space: nowrap; }
.tab.on { background: #1e90f5; color: #fff; border-radius: 10px; }
.help { margin-left: auto; width: 320px; height: 17px; border: 1px solid #ddd; border-radius: 3px; display: flex; align-items: center; overflow: hidden; position: relative; }
.help::before { content: ""; position: absolute; left: 0; top: 0; bottom: 0; width: 7px; background: #fff; z-index: 1; }
.help-text { white-space: nowrap; margin-left: 2px; }
.s-ic { color: #bbb; width: 14px; height: 14px; }
.help .s-ic { position: absolute; right: 7px; top: 1px; }
.u-ic { margin-left: 9px; color: #888; }
.c-ic { margin-left: 7px; margin-right: 7px; color: #888; --b: #888; }
.tip { position: absolute; left: 1289px; top: 13px; width: 179px; height: 34px; background: #0091ff; color: #fff; border-radius: 3px; line-height: 34px; padding-left: 7px; z-index: 5; }
.tip::after { content: ""; position: absolute; right: -5px; top: 13px; border: 5px solid transparent; border-left-color: #0091ff; border-right: 0; }

/* ribbon */
.ribbon { height: 98px; display: flex; border-top: 1px solid #f0f0f0; border-bottom: 2px solid #ddd; flex: none; }
.grp { display: flex; flex-direction: column; height: 92px; border-right: 1px solid #ddd; }
.g1 { width: 233px; padding-left: 8px; }
.g2 { width: 193px; padding-left: 8px; }
.g3 { width: 276px; padding-left: 9px; }
.g4 { width: 238px; padding-left: 10px; }
.g5 { width: 67px; padding-left: 7px; }
.g6 { width: 250px; padding-left: 8px; }
.g7 { width: 77px; }
.g8 { width: 502px; padding-left: 10px; }
.body { display: flex; height: 71px; flex: none; }
.col { display: flex; flex-direction: column; }
.w32 { width: 32px; } .w44 { width: 44px; } .w46 { width: 46px; } .w53 { width: 53px; } .w54 { width: 54px; }
.w63 { width: 63px; } .w67 { width: 67px; } .w79 { width: 79px; } .w86 { width: 86px; } .w91 { width: 91px; }
.w98 { width: 98px; } .w99 { width: 99px; } .w102 { width: 102px; } .w112 { width: 112px; } .w-full { width: 100%; }
.it { height: 23px; display: flex; align-items: center; white-space: nowrap; }
.it > span { margin-left: 3px; }
.it .caret { margin-left: 6px; }
.it.off span { color: #bdbdbd; }
.it.hl { height: 17px; margin: 3px 0 3px -3px; padding-left: 3px; width: 85px; background: #bdd6f0; }
.gt { text-align: center; margin-top: 5px; line-height: 16px; color: #444; margin-left: -8px; }
.g1 .gt, .g5 .gt { margin-left: -4px; }
.g3 .gt { margin-left: -9px; }
.c-big { margin-left: 6px; border-left-width: 4px; border-right-width: 4px; border-top-width: 4px; }
.c-arc { margin-left: 2px !important; }
.big { align-items: center; }
.big-ic { flex: none; }
.big span { margin-top: auto; }
.g1 .big { padding-right: 4px; }
.sel-ic { width: 24px; height: 30px; margin-top: 5px; margin-bottom: 3px; fill: #cfe2fb; stroke: #2f80e8; stroke-width: 2; }
.g1 .big span { margin-top: 0; }
.rec-ic { width: 30px; height: 30px; margin-top: 4px; margin-right: 6px; fill: none; stroke: #c4c4c4; stroke-width: 2; }
.g6 .big span { color: #bdbdbd; margin-top: 5px; }
.smart-ic { width: 30px; height: 30px; margin-top: 4px; fill: none; stroke: #444; stroke-width: 1.500; }
.dot { fill: #444; stroke: none; }
.smart-b { stroke: #2f80e8; stroke-width: 1.500; }
.g7 .big span { margin-top: 5px; }
.c-down { margin-top: 8px; }
.g7 .gt { margin-left: 0; margin-top: 5px; }
.rck { width: 14px; height: 14px; border-radius: 2px; background: #2f80e8; margin-left: -2px; margin-right: 1px; position: relative; flex: none; }
.rck::after { content: ""; position: absolute; left: 3px; top: 3px; width: 7px; height: 4px; border-left: 2px solid #fff; border-bottom: 2px solid #fff; transform: rotate(-45deg); }
.ring { position: absolute; left: 1325px; top: 61px; width: 112px; height: 36px; border-style: solid; border-color: #f23838; border-width: 7px 9px 9px 15px; border-radius: 50%; z-index: 4; }

/* selector bar */
.sel-bar { height: 26px; background: #f0f0f0; display: flex; gap: 3px; padding: 2px 0 0 3px; flex: none; }
.sel { width: 99px; height: 21px; background: #fff; border-radius: 3px; line-height: 21px; padding-left: 3px; position: relative; }
.sel .caret { position: absolute; right: 5px; top: 9px; border-top-color: #555; }

/* main */
.main { flex: 1; display: flex; min-height: 0; }
.close-bar { height: 11px; background: #e6e6e6; margin-top: 1px; position: relative; flex: none; }
.x { position: absolute; right: 3px; top: 0; color: #aaa; font: 13px/11px "Liberation Sans", sans-serif; }

.nav { width: 132px; border-right: 1px solid #d8d8d8; padding-left: 1px; flex: none; }
.nav-title { height: 22px; line-height: 20px; padding-left: 8px; color: #888; border-bottom: 1px solid #ddd; }
.nav-tools { height: 28px; display: flex; align-items: center; border-bottom: 1px solid #e4e4e4; margin-bottom: 3px; }
.tool-plus { margin: 0 7px 0 6px; }
.tool-on { width: 24px; height: 22px; background: #b9d7f6; border-radius: 3px; display: flex; align-items: center; justify-content: center; margin-right: 4px; }
.ni, .ns { height: 25px; line-height: 25px; margin-bottom: 3px; padding-left: 3px; width: 130px; position: relative; }
.ni { background: #ededed; }
.ns { padding-left: 49px; display: flex; align-items: center; }
.ns.on { background: #cce4ff; }
.nic { position: absolute; left: 16px; top: 3px; width: 20px; height: 20px; color: #2f80e8; stroke-width: 1.200; }
.red-dot { position: absolute; left: 40px; top: 2px; width: 6px; height: 6px; background: #f00; border-radius: 50%; }

.side { width: 299px; margin-left: 4px; display: flex; flex-direction: column; flex: none; gap: 4px; min-height: 0; }
.panel { border: 1px solid #ccc; border-top: 0; border-bottom-width: 1px; position: relative; display: flex; flex-direction: column; overflow: hidden; background: #fff; }
.p-list { height: 423px; flex: none; }
.p-prop { flex: 1; min-height: 0; border-bottom: 0; }
.ptabs { height: 23px; background: #f0f0f0; display: flex; flex: none; }
.ptab { width: 65px; text-align: center; line-height: 21px; font-size: 12px; color: #999; background: #d9d9d9; border: 1px solid #ccc; border-bottom: 0; border-left: 0; }
.ptab.on { color: #333; background: #f0f0f0; font-weight: 700; }
.ptools { height: 28px; display: flex; align-items: center; padding-left: 4px; flex: none; position: relative; color: #444; }
.pt { margin-left: 5px; }
.t-new { margin-left: 4px; }
.c-new { margin: 0 7px 0 8px; border-top-color: #999; }
.t-c { margin-right: 12px; }
.t-d { margin-right: 11px; }
.overflow-btn { position: absolute; right: 2px; top: 4px; width: 10px; height: 19px; border: 1px solid #e6e6e6; border-radius: 2px; display: flex; align-items: center; justify-content: center; gap: 1px; }
.ob { border: 3px solid transparent; border-left: 3px solid #555; border-right: 0; }
.psearch { height: 20px; border-top: 1px solid #e0e0e0; border-bottom: 1px solid #e0e0e0; display: flex; align-items: center; padding-left: 2px; color: #aaa; justify-content: space-between; padding-right: 6px; flex: none; }
.ptree { flex: 1; position: relative; padding-top: 1px; z-index: 0; }
.tr { height: 24px; line-height: 24px; white-space: nowrap; position: relative; }
.tr .caret { position: absolute; border-top-color: #666; border-left-width: 3.500px; border-right-width: 3.500px; border-top-width: 4px; top: 11px; }
.l0 { padding-left: 23px; }
.l0 .caret { left: 13px; }
.l1 { padding-left: 43px; }
.l1 .caret { left: 33px; }
.l2 { padding-left: 63px; }
.cnt { margin-left: 7px; letter-spacing: 1.200px; }
.cur::before { content: ""; position: absolute; left: 60px; top: 1px; width: 172px; height: 21px; background: #c2d8f0; border-radius: 2px; z-index: -1; }
.sb { position: absolute; background: #ccc; border-radius: 4px; width: 8px; right: 3px; }
.sb1 { top: 16px; height: 131px; }
.ptable { flex: 1; position: relative; min-height: 0; overflow: hidden; }
.sb2 { top: 14px; height: 203px; }
table { border-collapse: collapse; table-layout: fixed; }
.props { width: 282px; }
.c1 { width: 22px; } .c2 { width: 101px; } .c3 { width: 118px; } .c4 { width: 41px; }
.props th, .props td { height: 21px; padding: 0 2px; border: 1px solid #ddd; font-weight: 400; white-space: nowrap; overflow: hidden; line-height: 16px; }
.props th { height: 20px; text-align: center; color: #333; border-top: 0; border-left: 0; }
.props td:first-child { border-left: 0; }
.props .n { background: #f0f0f0; text-align: center; padding: 0; }
.bl { color: #2b5fdc; }
.m { text-align: center; padding: 0 !important; }
.cb { display: inline-block; width: 14px; height: 14px; border: 1px solid #888; border-radius: 3px; vertical-align: middle; position: relative; background: #fff; }
.steel { font-size: 9px; position: relative; top: -2px; margin: 0 1px; }
.ck { background: #2f80e8; border-color: #2f80e8; }
.ck::after { content: ""; position: absolute; left: 2px; top: 2px; width: 7px; height: 4px; border-left: 2px solid #fff; border-bottom: 2px solid #fff; transform: rotate(-45deg); }
.pt-c::after { content: ""; position: absolute; left: 1px; top: 1px; width: 10px; height: 10px; background: #90c2fb; }

.split { width: 5px; flex: none; position: relative; }
.split.r { width: 4px; }
.split-h { position: absolute; left: 0; top: 367px; width: 4px; height: 100px; background: #5c646c; }

.canvas { width: 1196px; position: relative; background: #000; flex: none; overflow: hidden; }
.cad { display: block; width: 1196px; height: 829px; }
.ax { font: 16px "Liberation Sans", sans-serif; fill: #eee; }
.ax-d { fill: #6a8a6a; }
.co { font: 16px "Liberation Sans", sans-serif; }
.co-y { fill: #00e000; }
.co-x { fill: #f00; }
.tools3d { position: absolute; left: 1162px; top: 0; width: 33px; height: 246px; background: #fff; border: 1px solid #ddd; border-top: 0; border-radius: 0 0 3px 3px; display: flex; flex-direction: column; align-items: center; padding: 14px 2px 0 0; }
.tb { width: 20px; height: 20px; margin-top: 5px; color: #4c5564; stroke-width: 1.100; }
.tools3d .tb:first-child { margin-top: 0; }
.tools3d .m12 { margin-top: 12px; }
.tools3d .m7 { margin-top: 7px; }
.tools3d .m9 { margin-top: 9px; }
.tools3d .m6 { margin-top: 6px; }
.caret-v { margin-top: 8px; border: 4px solid transparent; border-top: 4px solid #555; border-bottom: 0; }
.tsep { width: 24px; height: 1px; background: #666; margin-top: 8px; }
.hint { position: absolute; left: 0; right: 0; bottom: 0; height: 21px; background: rgba(0,0,0,.35); color: #fff; display: flex; align-items: center; padding-left: 429px; line-height: 20px; }
.hint-ic { width: 18px; height: 16px; fill: none; stroke: #ddd; margin-right: 1px; flex: none; }

.right { flex: 1; border-left: 1px solid #ddd; min-width: 0; overflow: hidden; }
.r-title { height: 22px; line-height: 20px; padding-left: 8px; color: #888; border-bottom: 1px solid #ddd; }
.r-tabs { height: 29px; padding: 4px 0 0 2px; display: flex; gap: 4px; }
.rtab { width: 62px; text-align: center; height: 23px; line-height: 22px; background: #e4e4e4; color: #666; border-radius: 3px 3px 0 0; }
.rtab.on { background: #fff; color: #2f80e8; border: 1px solid #ddd; border-bottom: 0; }
.disp { width: 209px; margin-left: 3px; border-top: 1px solid #ddd; }
.d1 { width: 132px; } .d2 { width: 63px; } .d3 { width: 14px; }
.disp th, .disp td { height: 21px; padding: 0; font-weight: 400; border: 1px solid #ddd; white-space: nowrap; overflow: hidden; line-height: 16px; position: relative; }
.disp th { text-align: center; }
.disp td:last-child, .disp th:last-child { border-right: 0; }
.disp .hd-on { background: #7ab8f5; color: #fff; }
.disp .hd-next { text-align: left; padding-left: 6px; }
.focus { outline: 2px solid #808080; outline-offset: -2px; }
.pm { display: inline-block; width: 13px; height: 13px; border: 1px solid #888; border-radius: 2px; vertical-align: -2px; position: relative; margin-right: 6px; }
.pm::after { content: ""; position: absolute; left: 3px; top: 5px; width: 5px; height: 1px; background: #555; }
.lv0 { padding-left: 1px !important; }
.lv1 { padding-left: 11px !important; }
.lv2 { padding-left: 40px !important; }
.lv1::before, .lv2::before { content: ""; position: absolute; left: 8px; top: 0; bottom: 0; width: 1px; background: #ddd; }
.lv2::after { content: ""; position: absolute; left: 17px; top: 0; bottom: 0; width: 17px; background: linear-gradient(#ddd, #ddd) 0 0 / 1px 100% no-repeat, linear-gradient(#ddd, #ddd) 0 10px / 100% 1px no-repeat; }
.lv2.end::after { bottom: auto; height: 11px; }
.r-foot { height: 32px; padding: 6px 0 0 181px; white-space: nowrap; }
.reset { display: inline-block; width: 60px; height: 25px; line-height: 23px; border: 1px solid #ddd; border-radius: 3px; padding: 0 8px; color: #444; overflow: hidden; }
```
